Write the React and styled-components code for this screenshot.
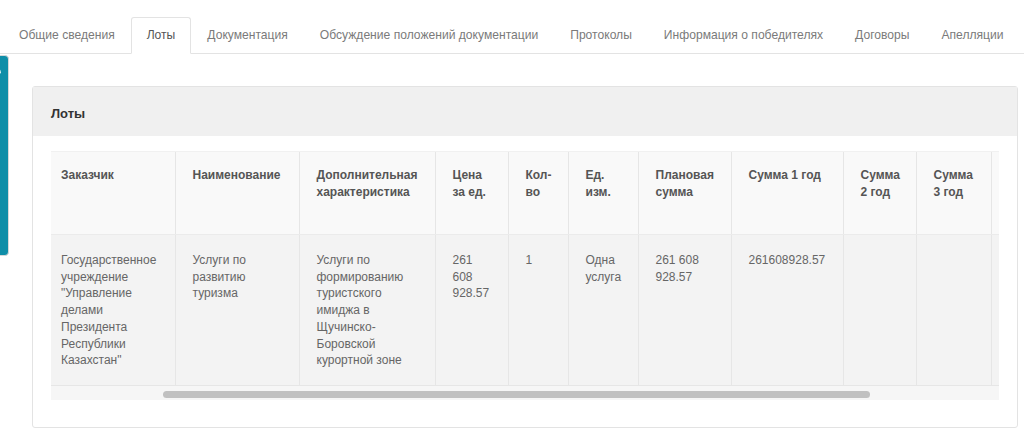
import React from "react";
import styled, { createGlobalStyle, css } from "styled-components";

const GlobalStyle = createGlobalStyle`
    html, body {
        margin: 0;
        padding: 0;
        background: #fff;
        overflow: hidden;
    }
    body {
        font-family: "Liberation Sans", Arial, Helvetica, sans-serif;
        color: #555;
    }
`

const Page = styled.div`
    width: 1024px;
    height: 430px;
    padding-top: 17px;
    box-sizing: border-box;
`

const TabBar = styled.ul`
    display: flex;
    margin: 0;
    padding: 0 0 0 3px;
    list-style: none;
    border-bottom: 1px solid #e3e3e3;
`

const Tab = styled.li`
    margin-bottom: -1px;
    padding: 9px 15px;
    line-height: 17px;
    font-size: 12.1px;
    color: #7a7a7a;
    white-space: nowrap;
    border: 1px solid transparent;
    border-radius: 3px 3px 0 0;

    ${props =>
        props.$active &&
        css`
        color: #555;
        background-color: #fff;
        border-color: #e3e3e3 #e3e3e3 transparent;
    `
    }
`

const Content = styled.div`
    padding: 32px 6px 0 32px;
`

const Panel = styled.section`
    border: 1px solid #e3e3e3;
    border-radius: 3px;
    height: 342px;
    box-sizing: border-box;
`

const PanelHeader = styled.div`
    height: 49px;
    display: flex;
    align-items: center;
    padding: 3px 18px 0;
    box-sizing: border-box;
    background-color: #f0f0f0;
    font-size: 13px;
    font-weight: 700;
    color: #333;
`

const PanelBody = styled.div`
    padding: 15px 18px 0;
`

const TableWrap = styled.div`
    overflow: hidden;
`

const Table = styled.table`
    width: ${props => props.$width}px;
    border-collapse: collapse;
    table-layout: fixed;
    font-size: 12px;
`

const HeadRow = styled.tr`
    height: 83px;
    background-color: #f9f9f9;
`

const BodyRow = styled.tr`
    height: 151px;
    background-color: #f3f3f3;
`

const Th = styled.th`
    vertical-align: top;
    text-align: left;
    padding: 15px 8px 0 17px;
    line-height: 17px;
    font-weight: 700;
    color: #555;
    white-space: pre;
    overflow: hidden;
    border-left: 1px solid #e6e6e6;
    border-top: 1px solid #f1f1f1;
    border-bottom: 1px solid #ebebeb;

    &:first-child {
        border-left: none;
        padding-left: 10px;
    }
`

const Td = styled.td`
    vertical-align: top;
    padding: 17px 8px 0 17px;
    line-height: 16.7px;
    color: #666;
    white-space: pre;
    overflow: hidden;
    border-left: 1px solid #e6e6e6;
    border-bottom: 1px solid #e6e6e6;

    &:first-child {
        border-left: none;
        padding-left: 10px;
    }
`

const ScrollTrack = styled.div`
    height: 14px;
    padding-top: 5px;
    box-sizing: border-box;
    background-color: #f6f6f6;
`

const ScrollThumb = styled.div`
    margin-left: 112px;
    width: 707px;
    height: 7px;
    border-radius: 4px;
    background-color: #c1c1c1;
`

const SideTab = styled.div`
    position: fixed;
    top: 55px;
    left: -21px;
    width: 30px;
    height: 201px;
    box-sizing: border-box;
    display: flex;
    align-items: center;
    padding-left: 2px;
    background-color: #0f8ea8;
    border: 1px solid #d8d8d8;
    border-radius: 4px;
    color: #fff;
    font-size: 12px;
    letter-spacing: 2px;
    writing-mode: vertical-rl;
`

const tabs = [
    "Общие сведения",
    "Лоты",
    "Документация",
    "Обсуждение положений документации",
    "Протоколы",
    "Информация о победителях",
    "Договоры",
    "Апелляции",
]

const columns = [
    { w: 124, head: "Заказчик", body: "Государственное\nучреждение\n\"Управление\nделами\nПрезидента\nРеспублики\nКазахстан\"" },
    { w: 124, head: "Наименование", body: "Услуги по\nразвитию\nтуризма" },
    { w: 136, head: "Дополнительная\nхарактеристика", body: "Услуги по\nформированию\nтуристского\nимиджа в\nЩучинско-\nБоровской\nкурортной зоне" },
    { w: 73, head: "Цена\nза ед.", body: "261\n608\n928.57" },
    { w: 60, head: "Кол-\nво", body: "1" },
    { w: 70, head: "Ед.\nизм.", body: "Одна\nуслуга" },
    { w: 93, head: "Плановая\nсумма", body: "261 608\n928.57" },
    { w: 112, head: "Сумма 1 год", body: "261608928.57" },
    { w: 73, head: "Сумма\n2 год", body: "" },
    { w: 75, head: "Сумма\n3 год", body: "" },
    { w: 110, head: "", body: "" },
]

const tableWidth = columns.reduce((sum, c) => sum + c.w, 0)

const App = () => {
    return (
        <Page>
            <GlobalStyle />
            <TabBar>
                {tabs.map(t => (
                    <Tab key={t} $active={t === "Лоты"}>{t}</Tab>
                ))}
            </TabBar>
            <Content>
                <Panel>
                    <PanelHeader>Лоты</PanelHeader>
                    <PanelBody>
                        <TableWrap>
                            <Table $width={tableWidth}>
                                <colgroup>
                                    {columns.map((c, i) => <col key={i} style={{ width: c.w }} />)}
                                </colgroup>
                                <thead>
                                    <HeadRow>
                                        {columns.map((c, i) => <Th key={i}>{c.head}</Th>)}
                                    </HeadRow>
                                </thead>
                                <tbody>
                                    <BodyRow>
                                        {columns.map((c, i) => <Td key={i}>{c.body}</Td>)}
                                    </BodyRow>
                                </tbody>
                            </Table>
                        </TableWrap>
                        <ScrollTrack>
                            <ScrollThumb />
                        </ScrollTrack>
                    </PanelBody>
                </Panel>
            </Content>
            <SideTab>Обратная связь</SideTab>
        </Page>
    )
}

export default App;
